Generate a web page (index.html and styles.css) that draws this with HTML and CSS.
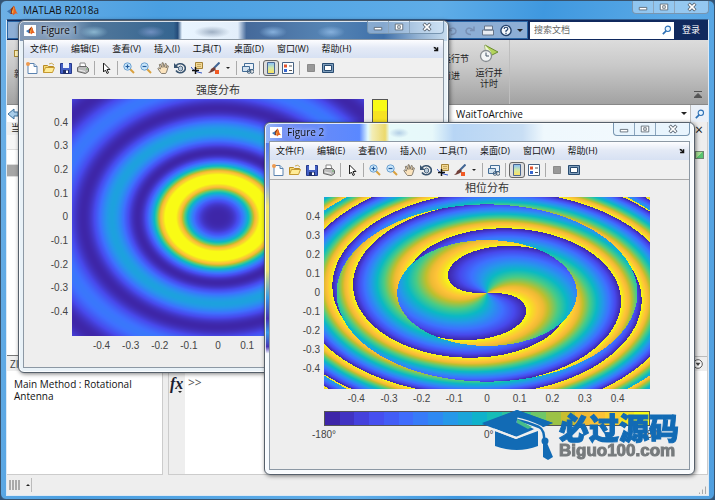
FILE: index.html
```html
<!DOCTYPE html>
<html lang="zh-CN">
<head>
<meta charset="utf-8">
<title>MATLAB R2018a</title>
<link rel="stylesheet" href="styles.css">
</head>
<body>
<svg class="sprite" aria-hidden="true">
  <symbol id="logo" viewBox="0 0 16 16"><path d="M0 9l5-3 3 3-3 4z" fill="#3f79b5"/><path d="M5 6l5-5 2 5-5 7-2 0 1-4z" fill="#8d3316"/><path d="M10 1c2 3 3 9 6 12-3-1-4-1-7 2L7 11z" fill="#e7621f"/><path d="M10 1L7 11l2 1z" fill="#f7b64a"/></symbol>
  <symbol id="new" viewBox="0 0 12 12"><path d="M2 1.500h6l3 3v7H2z" fill="#fff" stroke="#5b83b0"/><path d="M8 1.500v3h3" fill="#dbe8f5" stroke="#5b83b0"/><circle cx="2" cy="2" r="2" fill="#ee9a4e"/></symbol>
  <symbol id="open" viewBox="0 0 12 12"><path d="M.5 10.500v-7h4l1 1h5v2" fill="#f5d976" stroke="#b98b25"/><path d="M.5 10.500l2-5h9l-2 5z" fill="#ffec97" stroke="#c59930"/><path d="M6 2q3-2 5 1" fill="none" stroke="#ccab55"/></symbol>
  <symbol id="save" viewBox="0 0 12 12"><path d="M.5 1.500h11v10h-11z" fill="#4460c4" stroke="#263a8c"/><path d="M3 1h6v5H3z" fill="#eef2fb"/><path d="M3 8h6v4H3z" fill="#20306c"/><path d="M6 8.500h2V11H6z" fill="#fff"/></symbol>
  <symbol id="print" viewBox="0 0 12 12"><path d="M3 1h5l1 5H3z" fill="#fff" stroke="#888"/><path d="M.5 5.500l2-1h7l2 2v3l-3 2-8-2z" fill="#bbb" stroke="#666"/><path d="M2 8l6 1.500" stroke="#eee"/><circle cx="10" cy="7" r=".7" fill="#4a4"/></symbol>
  <symbol id="arrow" viewBox="0 0 12 12"><path d="M3.500 1v9l2-2 1.500 3.500 1.500-.7L7 7.500h3z" fill="#fff" stroke="#222"/></symbol>
  <symbol id="zin" viewBox="0 0 12 12"><path d="M7 7l4 4" stroke="#d9a03d" stroke-width="2"/><circle cx="4.500" cy="4.500" r="3.700" fill="#c9e6fb" stroke="#6ba0d0"/><path d="M2.500 4.500h4M4.500 2.500v4" stroke="#235c9d" stroke-width="1.200"/></symbol>
  <symbol id="zout" viewBox="0 0 12 12"><path d="M7 7l4 4" stroke="#d9a03d" stroke-width="2"/><circle cx="4.500" cy="4.500" r="3.700" fill="#c9e6fb" stroke="#6ba0d0"/><path d="M2.500 4.500h4" stroke="#235c9d" stroke-width="1.200"/></symbol>
  <symbol id="pan" viewBox="0 0 12 12"><path d="M3.500 10.500L.8 6.500l1-.6L3.500 7 2.300 2.500l1-.4L5 5.500 5 .8h1.200L7 5.300 8.300 1.400l1 .4L9 6l1.500-2.500.9.500-1.800 6-1 1.500h-4z" fill="#fbe3bd" stroke="#6b6357" stroke-width=".8"/></symbol>
  <symbol id="rot" viewBox="0 0 12 12"><path d="M2 4a5 4.500 0 1 1 0 4.500" fill="none" stroke="#38536f" stroke-width="1.600"/><path d="M0 1v5h5z" fill="#38536f"/><path d="M4.500 5l2-1 2 1v3l-2 1-2-1z" fill="#b9cad9" stroke="#38536f" stroke-width=".8"/></symbol>
  <symbol id="tip" viewBox="0 0 12 12"><path d="M4.500.5h7v6h-7z" fill="#f4d892" stroke="#a48338"/><path d="M6 2.500h4M6 4.500h4" stroke="#af9350" stroke-width=".7"/><path d="M0 5q3 5 11 6" fill="none" stroke="#2f54c8"/><path d="M1 8.500h7M4.500 5v7" stroke="#111" stroke-width="1.500"/></symbol>
  <symbol id="brush" viewBox="0 0 12 12"><path d="M11.500.5L6 6" stroke="#426694" stroke-width="2"/><path d="M6 5l2 2q-2 3-8 4 3-2 3-4z" fill="#713f38"/><path d="M7 8h4v4H7z" fill="#f15a24"/></symbol>
  <symbol id="link" viewBox="0 0 12 12"><path d="M2.500 1.500h9v6h-9z" fill="#eaf2fa" stroke="#436d97"/><path d="M.5 4.500h7v5h-7z" fill="#d2e2ef" stroke="#436d97"/><circle cx="7" cy="9.500" r="1.800" fill="none" stroke="#476179"/><circle cx="10" cy="9.500" r="1.800" fill="none" stroke="#476179"/></symbol>
  <symbol id="cbar" viewBox="0 0 12 12"><linearGradient id="cg" x2="0" y2="1"><stop stop-color="#86bfff"/><stop offset=".5" stop-color="#d2e9a8"/><stop offset="1" stop-color="#ffe15b"/></linearGradient><path d="M2.500.5h7v11h-7z" fill="url(#cg)" stroke="#4b6790"/></symbol>
  <symbol id="legend" viewBox="0 0 12 12"><path d="M.5.500h11v11H.5z" fill="#fff" stroke="#476282"/><path d="M2 2.500h3v3H2z" fill="#e4532c"/><path d="M2 7h3v3H2z" fill="#3767d0"/><path d="M7 4h3M7 8.500h3" stroke="#555"/></symbol>
  <symbol id="stop" viewBox="0 0 12 12"><path d="M2.500 2.500h7v7h-7z" fill="#989898" stroke="#8a8a8a"/></symbol>
  <symbol id="dock" viewBox="0 0 12 12"><path d="M.5 1.500h11v9H.5z" fill="#7f9ebc" stroke="#284b70"/><path d="M2.500 3.500h7v5h-7z" fill="#fff" stroke="#284b70"/></symbol>
  <symbol id="wmin" viewBox="0 0 12 12"><path d="M1.500 6.500h9v3h-9z" fill="#fff" stroke="#56616e"/></symbol>
  <symbol id="wmax" viewBox="0 0 12 12"><path d="M1.500 2.500h9v7h-9zM4.500 4.500h3v3h-3z" fill="#fff" stroke="#56616e"/></symbol>
  <symbol id="wclose" viewBox="0 0 12 12"><path d="M2 2l8 8M10 2l-8 8" stroke="#56616e" stroke-width="4"/><path d="M2.500 2.500l7 7M9.500 2.500l-7 7" stroke="#fff" stroke-width="2"/></symbol>
  <symbol id="find" viewBox="0 0 12 12"><path d="M1 11l4-4" stroke="#2d70b5" stroke-width="2"/><circle cx="7" cy="4.500" r="3.200" fill="#e8f5ff" stroke="#2d70b5" stroke-width="1.300"/></symbol>
  <symbol id="run" viewBox="0 0 20 20"><path d="M6 1l13 7L7 14z" fill="#b3d35c" stroke="#6c8d32"/><path d="M6 1l6 7-5 6z" fill="#f0f7d5"/><circle cx="7" cy="12" r="5.500" fill="#f4f6f7" stroke="#878c91" stroke-width="1.300"/><path d="M7 8.500V12h3" fill="none" stroke="#456"/></symbol>
  <symbol id="dockarrow" viewBox="0 0 8 8"><path d="M1 1q3 0 4 3V1.500h2V7H1.500V5H4Q3 3 1 3z" fill="#111"/></symbol>
</svg>

<template id="figure-bars">
  <nav class="menu" aria-label="菜单">
    <button>文件(F)</button><button>编辑(E)</button><button>查看(V)</button><button>插入(I)</button><button>工具(T)</button><button>桌面(D)</button><button>窗口(W)</button><button>帮助(H)</button>
    <button class="dockbtn" aria-label="停靠"><svg><use href="#dockarrow"/></svg></button>
  </nav>
  <div class="tools">
    <button aria-label="新建"><svg><use href="#new"/></svg></button>
    <button aria-label="打开"><svg><use href="#open"/></svg></button>
    <button aria-label="保存"><svg><use href="#save"/></svg></button>
    <button aria-label="打印"><svg><use href="#print"/></svg></button>
    <i></i>
    <button aria-label="选择"><svg><use href="#arrow"/></svg></button>
    <i></i>
    <button aria-label="放大"><svg><use href="#zin"/></svg></button>
    <button aria-label="缩小"><svg><use href="#zout"/></svg></button>
    <button aria-label="平移"><svg><use href="#pan"/></svg></button>
    <button aria-label="旋转"><svg><use href="#rot"/></svg></button>
    <button aria-label="数据游标"><svg><use href="#tip"/></svg></button>
    <button aria-label="刷亮"><svg><use href="#brush"/></svg></button>
    <span class="caret"></span>
    <i></i>
    <button aria-label="链接"><svg><use href="#link"/></svg></button>
    <i></i>
    <button class="on" aria-label="颜色栏"><svg><use href="#cbar"/></svg></button>
    <button aria-label="图例"><svg><use href="#legend"/></svg></button>
    <i></i>
    <button aria-label="隐藏绘图工具"><svg><use href="#stop"/></svg></button>
    <button aria-label="显示绘图工具"><svg><use href="#dock"/></svg></button>
  </div>
</template>

<main class="app">
  <header class="apptitle"><svg class="logo"><use href="#logo"/></svg><h1>MATLAB R2018a</h1>
    <div class="winbtns"><button aria-label="最小化"><svg><use href="#wmin"/></svg></button><button aria-label="最大化"><svg><use href="#wmax"/></svg></button><button aria-label="关闭"><svg><use href="#wclose"/></svg></button></div>
  </header>
  <div class="shell">
    <div class="quick">
      <div class="quicktools">
        <svg viewBox="0 0 14 12"><path d="M3 2v4h4M3 6q6-5 8 0 0 4-5 4" fill="none" stroke="#7890b4" stroke-width="1.500"/></svg>
        <svg viewBox="0 0 14 12"><path d="M11 2v4H7M11 6Q5 1 3 6q0 4 5 4" fill="none" stroke="#7890b4" stroke-width="1.500"/></svg>
        <svg viewBox="0 0 14 12"><path d="M3.500 1.500h8v4h-8zM1.500 5.500h11v5h-11z" fill="#e8ecf2" stroke="#667488"/></svg>
        <svg viewBox="0 0 14 14"><circle cx="7" cy="7" r="5.500" fill="#f4f8fc" stroke="#25446e" stroke-width="1.500"/><path d="M5 5.500q0-2 2-2t2 1.800q0 1-2 2V8.500M7 9.500v1.500" fill="none" stroke="#25446e" stroke-width="1.300"/></svg>
        <span class="caret"></span>
      </div>
      <label class="search"><input type="text" aria-label="搜索文档" placeholder="搜索文档"><svg><use href="#find"/></svg></label>
      <a class="login" href="#">登录</a>
    </div>
    <div class="ribbon">
      <div class="newcol"><span class="newfile"></span><span>新</span></div>
      <div class="runcol"><button>运行节</button><button>前进</button></div>
      <button class="runtime"><svg><use href="#run"/></svg><span>运行并</span><span>计时</span></button>
      <svg class="collapse" viewBox="0 0 8 7"><path d="M0 .5h8M0 6.500h8L4 2.500z" fill="#555" stroke="#555"/></svg>
    </div>
    <div class="address">
      <svg class="back" viewBox="0 0 12 12"><path d="M1 6l6-5v3h4v4H7v3z" fill="#a8cdea" stroke="#3e729e"/></svg>
      <label class="path"><select aria-label="当前文件夹"><option>WaitToArchive</option></select><span class="caret"></span></label>
      <button class="find" aria-label="搜索文件夹"><svg><use href="#find"/></svg></button>
    </div>
    <div class="workspace">
      <section class="side"><h2>当前</h2><div class="row"></div><div class="row blank"></div><div class="row sel"></div><div class="files"></div><h3>ZI</h3><p>Main Method : Rotational Antenna</p></section>
      <section class="right">
        <div class="editor"><div class="gutter"><button aria-label="关闭编辑器">×</button><span class="ok"></span></div></div>
        <div class="cmdhead"><svg viewBox="0 0 10 10"><circle cx="5" cy="5" r="4.300" fill="#fff" stroke="#555"/><path d="M2.500 3.800h5L5 7z" fill="#444"/></svg></div>
        <div class="cmd"><div class="fx">fx<span class="caret"></span></div><code>&gt;&gt;</code></div>
      </section>
    </div>
    <footer class="status"><span class="bars"></span><span class="up"></span><span class="grip"></span></footer>
  </div>
</main>

<section class="figure one" aria-label="Figure 1">
  <header><span class="badge"><svg class="logo"><use href="#logo"/></svg></span><h2>Figure 1</h2>
    <div class="winbtns"><button aria-label="最小化"><svg><use href="#wmin"/></svg></button><button aria-label="最大化"><svg><use href="#wmax"/></svg></button><button aria-label="关闭"><svg><use href="#wclose"/></svg></button></div></header>
  <div class="pane">
    <div class="bars-slot"></div>
    <div class="axes">
      <h3>强度分布</h3>
      <div class="yticks"></div>
      <canvas id="intensity" width="292" height="237"></canvas>
      <canvas class="vbar" id="vbar" width="14" height="237"></canvas>
      <div class="xticks"></div>
    </div>
  </div>
</section>

<section class="figure two" aria-label="Figure 2">
  <header><span class="badge"><svg class="logo"><use href="#logo"/></svg></span><h2>Figure 2</h2>
    <div class="winbtns"><button aria-label="最小化"><svg><use href="#wmin"/></svg></button><button aria-label="最大化"><svg><use href="#wmax"/></svg></button><button aria-label="关闭"><svg><use href="#wclose"/></svg></button></div></header>
  <div class="pane">
    <div class="bars-slot"></div>
    <div class="axes">
      <h3>相位分布</h3>
      <div class="yticks"></div>
      <canvas id="phase" width="326" height="192"></canvas>
      <div class="xticks"></div>
      <canvas class="hbar" id="hbar" width="324" height="13"></canvas>
      <div class="degrees"><span>-180°</span><span>0°</span><span>180°</span></div>
    </div>
  </div>
</section>

<div class="brand">
  <svg viewBox="0 0 72 51"><path d="M0 14L35 0l36 13-14 6-22-9v3l18 7-18 7z" fill="#126bb5"/><path d="M13 21l21 8 22-8v15q-21 8-43 0z" fill="#126bb5"/><path d="M0 13l34 13 18-7-16-7 2-3 20 8 13-4L35 0z" fill="#126bb5"/><path d="M12 19.500l22 8.500 19-8" fill="none" stroke="#eee" stroke-width="2"/><path d="M35 10q10 2 23 8 6 3 5 15" fill="none" stroke="#eee" stroke-width="5"/><path d="M35 10q10 2 22 7 6 3 5 15" fill="none" stroke="#126bb5" stroke-width="2.500"/><circle cx="63" cy="31" r="3.500" fill="#126bb5"/><path d="M61 33h4l6 14-5 3-5-3z" fill="#126bb5"/><path d="M35 9l15 8-4 2-11-6z" fill="#48bd8a"/></svg>
  <div><strong>必过源码</strong><span>Biguo100.com</span></div>
</div>
<script src="plots.js"></script>
</body>
</html>
```
FILE: styles.css
```css
* { box-sizing: border-box; }
body { margin: 0; height: 100vh; overflow: hidden; position: relative; background: #315478; color: #222; font: 10px/12px "Open Sans", "Noto Sans CJK SC", sans-serif; }
h1, h2, h3, p { margin: 0; font-size: 10px; font-weight: 400; }
button { padding: 0; border: 0; background: none; color: inherit; font: inherit; }
svg { display: block; flex: none; }
.sprite { position: absolute; width: 0; height: 0; }
.logo { width: 11px; height: 11px; }
.caret { flex: none; width: 0; border: 3px solid transparent; border-top: 3px solid #222; border-bottom: 0; }

.app { height: 100vh; display: flex; flex-direction: column; padding: 0 5px 3px; border: 1px solid #38536e; border-radius: 6px; background: linear-gradient(100deg, #6db0e6, #4a9fe1 20%, #5fade8 55%, #3f98df 68%, #5caae6 85%, #509fdf); }
.apptitle { flex: none; height: 18px; display: flex; align-items: center; gap: 5px; padding-left: 1px; }
.apptitle h1 { color: #111; }
.winbtns { margin-left: auto; align-self: flex-start; display: flex; height: 13px; border: 1px solid #7795b0; border-top: 0; border-radius: 0 0 4px 4px; background: rgba(220, 237, 252, .45); }
.winbtns button { width: 21px; display: grid; place-items: center; border-right: 1px solid #8ba5bd; }
.winbtns button:last-child { width: 33px; border: 0; }
.winbtns svg { width: 10px; height: 10px; }
.shell { flex: 1; min-height: 0; display: flex; flex-direction: column; background: #eee; border: 1px solid #dce9f5; border-top-color: #335f90; }
.quick { flex: none; height: 20px; display: flex; align-items: center; background: #10295e; }
.quicktools { flex: 1; height: 18px; display: flex; justify-content: flex-end; align-items: center; gap: 4px; padding-right: 4px; margin-right: 2px; background: #8daed5; border: 1px solid #2865a5; }
.quicktools svg { width: 14px; height: 13px; }
.search { flex: 0 0 144px; height: 17px; display: flex; align-items: center; background: #fff; padding: 0 2px 0 4px; }
.search input { flex: 1; min-width: 0; border: 0; outline: 0; padding: 0; background: none; font: inherit; font-size: 9px; }
.search input::placeholder { color: #666; }
.search svg, .find svg { width: 10px; height: 10px; }
.login { width: 34px; text-align: center; color: #fff; text-decoration: none; font-size: 9px; }
.ribbon { flex: none; height: 64px; display: flex; align-items: stretch; background: linear-gradient(#dcdcdc, #c9c9c9 40%, #a2a2a2); font-size: 9px; line-height: 11px; position: relative; }
.newcol { width: 14px; overflow: hidden; padding: 10px 0 0 7px; display: flex; flex-direction: column; gap: 11px; }
.newfile { width: 6px; height: 7px; border: 1px solid #a88a36; background: #fff2b6; flex: none; }
.runcol { margin-left: auto; display: flex; flex-direction: column; gap: 6px; padding-top: 13px; align-items: flex-start; }
.runtime { width: 41px; margin-right: 198px; padding-top: 4px; display: flex; flex-direction: column; align-items: center; border-right: 1px solid #bebebe; }
.runtime svg { width: 20px; height: 20px; margin-bottom: 3px; }
.collapse { position: absolute; right: 6px; bottom: 6px; width: 8px; height: 7px; }
.address { flex: none; height: 18px; display: flex; align-items: center; background: #fff; border-top: 1px solid #888; }
.back { width: 12px; height: 12px; }
.path { flex: 1; display: flex; align-items: center; padding-right: 3px; padding-left: 437px; }
.path select { flex: 1; appearance: none; border: 0; background: none; color: #111; font: inherit; padding: 0; }
.find { width: 18px; height: 17px; display: grid; place-items: center; background: #eaf0f8; border-left: 1px solid #bbb; }
.workspace { flex: 1; min-height: 0; display: grid; grid-template-columns: 156px 1fr; gap: 5px; }
.side { min-height: 0; display: flex; flex-direction: column; background: #fff; border-right: 1px solid #ccc; border-bottom: 1px solid #ccc; }
.side h2 { height: 13px; padding-left: 4px; font-size: 9px; background: #eee; }
.row { height: 15px; background: #f6f6f6; border-bottom: 1px solid #ddd; }
.row.blank { background: #fff; }
.row.sel { height: 12px; background: #a6a6a6; }
.files { flex: 1; }
.side h3 { height: 16px; padding: 2px 3px; border-top: 1px solid #777; background: #eee; color: #444; }
.side p { height: 103px; padding: 7px 12px 0 7px; color: #111; }
.right { min-height: 0; display: flex; flex-direction: column; background: #fff; border: 1px solid #ccc; border-top: 0; }
.editor { flex: 1; display: flex; justify-content: flex-end; background: #fff; }
.gutter { width: 17px; display: flex; flex-direction: column; align-items: center; gap: 14px; padding-top: 1px; background: #eee; border-left: 1px solid #ccc; }
.gutter button { font: 14px/14px "Open Sans", sans-serif; color: #222; }
.ok { width: 9px; height: 8px; background: linear-gradient(135deg, #a7e096 50%, #58c56f 50%); border: 1px solid #708570; }
.cmdhead { height: 15px; display: flex; justify-content: flex-end; align-items: center; padding-right: 4px; background: #eee; border-top: 1px solid #bbb; }
.cmdhead svg { width: 10px; height: 10px; }
.cmd { height: 103px; display: flex; gap: 3px; }
.fx { width: 16px; padding: 5px 1px; background: #eee; font: italic bold 16px/15px "Liberation Serif", serif; color: #1a1d30; }
.fx .caret { display: block; margin-left: 8px; border-width: 2px; border-bottom: 0; }
.cmd code { padding-top: 6px; font: 12px/12px "Open Sans", sans-serif; color: #555; }
.status { flex: none; height: 20px; display: flex; align-items: center; gap: 3px; padding: 0 2px; }
.bars { width: 12px; height: 10px; background: repeating-linear-gradient(90deg, #aaa 0 2px, #eee 2px 3px); }
.up { height: 14px; width: 8px; border-right: 1px solid #bbb; display: grid; place-items: center; }
.up::before { content: ""; border: 2px solid transparent; border-top: 0; border-bottom-color: #222; }
.grip { margin: auto 0 1px auto; width: 8px; height: 8px; background: repeating-linear-gradient(90deg, transparent 0 1px, #aaa 1px 2px, transparent 2px 3px); clip-path: polygon(100% 0, 100% 100%, 0 100%); }

.figure { position: absolute; width: 431px; display: flex; flex-direction: column; padding: 0 4px 4px; border: 1px solid #56606b; border-radius: 6px; box-shadow: inset 0 0 0 1px rgba(255, 255, 255, .8), 1px 1px 4px rgba(0, 0, 0, .5); }
.one { left: 18px; top: 20px; background: radial-gradient(ellipse 14px 6px at 75px 11px, #8bb6d0, transparent) no-repeat, radial-gradient(ellipse 14px 6px at 132px 11px, #6f8fc0, transparent) no-repeat, radial-gradient(ellipse 18px 6px at 193px 11px, #9fb0c4, transparent) no-repeat, radial-gradient(ellipse 14px 6px at 254px 11px, #86b0dc, transparent) no-repeat, radial-gradient(ellipse 14px 6px at 312px 11px, #86b0dc, transparent) no-repeat, linear-gradient(90deg, #8298b5, #7d9bbb 12%, #51779b 17%, #356590 36%, #244b79 37%, #e9f5ff 38%, #e3eefa 51%, #45699a 53%, #5685b5 72%, #3f70a9 85%, #93b2d3 93%, #c9deef) 0 0 / 100% 20px no-repeat, #e9f2f8; }
.two { left: 264px; top: 122px; background: radial-gradient(ellipse 10px 5px at 134px 10px, #b4cfe6, transparent) no-repeat, linear-gradient(90deg, #99b9fa, #718df4 5%, #5a88ff 22%, #e1faff 24%, #f2edb6 25%, #ecd96c 28%, #e7fafa 29%, #e7f8fa 39%, #b7d5f5 44%, #c8def4 60%, #eff8fd 65%, #f4fafe) 0 0 / 100% 20px no-repeat, linear-gradient(#557ced, #8fafeb 12%, #f5e76e 18%, #f5e76e 36%, #389ae7 44%, #4634b5 50%, #389ae7 54%, #4634b5 58%, #f7fbff 60%) 0 20px / 5px 100% no-repeat, #f8fbfd; }
.figure header { height: 18px; display: flex; align-items: center; gap: 5px; padding-left: 1px; }
.figure header h2 { color: #111; text-shadow: 0 0 5px #fff; }
.badge { width: 12px; height: 11px; background: #fff; display: grid; place-items: center; }
.badge .logo { width: 9px; height: 9px; }
.pane { background: #eee; border: 1px solid #8c98a4; }
.menu { height: 18px; display: flex; align-items: center; gap: 13px; padding: 0 4px 0 6px; background: linear-gradient(#fdfdff, #e4eaf6 45%, #d7e1f3); font: 9px/12px "Open Sans", "Noto Sans CJK SC", sans-serif; color: #111; }
.dockbtn { margin-left: auto; }
.dockbtn svg { width: 6px; height: 6px; }
.tools { height: 20px; display: flex; align-items: center; gap: 1px; border-bottom: 1px solid #aaa; background: #f0f0f0; }
.tools button { width: 16px; height: 16px; display: grid; place-items: center; }
.tools svg { width: 12px; height: 12px; }
.tools i { width: 1px; height: 14px; margin: 0 2px; background: #aaa; }
.tools .caret { margin: 0 3px; border-width: 2px; border-bottom: 0; }
.tools .on { border: 1px solid #666; border-radius: 3px; background: #ddd; }
.axes { display: grid; font: 10px/12px "Liberation Sans", "Noto Sans CJK SC", sans-serif; color: #444; }
.axes h3 { grid-column: 2; text-align: center; font: 11px/14px "Liberation Serif", "Noto Sans CJK SC", serif; color: #333; }
.axes canvas { display: block; width: 100%; }
.one .axes { grid-template-columns: 48px 292px 16px; grid-template-rows: 21px 237px 31px; }
.one h3 { padding-top: 5px; }
.axes .vbar { width: 16px; margin-left: 8px; border: 1px solid #555; height: 237px; }
.two .axes { grid-template-columns: 54px 326px; grid-template-rows: 17px 192px 22px 15px 43px; }
.two h3 { padding-top: 1px; }
.yticks { grid-column: 1; display: grid; grid-template-rows: repeat(9, 1fr); align-items: center; text-align: right; padding-right: 4px; }
.one .yticks { padding-block: 12px; }
.two .yticks { padding-block: 10px; }
.xticks { grid-column: 2; display: grid; grid-template-columns: repeat(9, 1fr); text-align: center; padding-top: 4px; }
.one .xticks { padding-inline: 15px; }
.two .xticks { padding-inline: 16px; }
.axes .hbar { grid-column: 2; height: 15px; border: 1px solid #555; }
.degrees { grid-column: 2; display: flex; justify-content: space-between; padding-top: 3px; margin: 0 -12px; }

.brand { position: absolute; left: 482px; top: 410px; display: flex; gap: 5px; align-items: flex-start; }
.brand svg { width: 72px; height: 51px; }
.brand strong { display: block; color: #126bb5; font: 900 30px/32px "Noto Sans CJK SC", sans-serif; -webkit-text-stroke: 1px #126bb5; }
.brand span { display: block; color: #777b7d; font: bold 17px/17px "Liberation Sans", sans-serif; -webkit-text-stroke: 1px #777b7d; }
```
FILE: plots.js
```js
const template = document.getElementById('figure-bars');
document.querySelectorAll('.bars-slot').forEach(slot => slot.replaceWith(template.content.cloneNode(true)));

const ticks = ['-0.4', '-0.3', '-0.2', '-0.1', '0', '0.1', '0.2', '0.3', '0.4'];
const fill = (el, labels) => labels.forEach(t => {
  const s = document.createElement('span');
  s.textContent = t;
  el.append(s);
});
document.querySelectorAll('.xticks').forEach(el => fill(el, ticks));
document.querySelectorAll('.yticks').forEach(el => fill(el, [...ticks].reverse()));

const stops = [
  [0, 62, 38, 168], [0.125, 71, 73, 236], [0.25, 62, 112, 255], [0.375, 38, 150, 235],
  [0.5, 10, 185, 195], [0.625, 72, 203, 134], [0.75, 190, 191, 45], [0.81, 238, 186, 52],
  [0.875, 254, 195, 56], [0.94, 246, 221, 38], [1, 249, 251, 21]
];
function parula(v) {
  v = Math.min(1, Math.max(0, v));
  let i = 1;
  while (i < stops.length - 1 && v > stops[i][0]) i++;
  const a = stops[i - 1], b = stops[i], t = (v - a[0]) / (b[0] - a[0]);
  return [1, 2, 3].map(k => a[k] + (b[k] - a[k]) * t);
}
// Bessel function of the first kind, order 2, from its integral form.
function j2(x) {
  let sum = 0;
  for (let i = 0; i < 40; i++) {
    const t = (i + 0.5) * Math.PI / 40;
    sum += Math.cos(2 * t - x * Math.sin(t));
  }
  return sum / 40;
}
const Z2 = 2.99;
const radial = r => j2(32.65 * r / Math.sqrt(r * r + Z2));
function paint(id, value) {
  const c = document.getElementById(id), ctx = c.getContext('2d');
  const img = ctx.createImageData(c.width, c.height);
  for (let y = 0; y < c.height; y++) for (let x = 0; x < c.width; x++) {
    const u = (x + 0.5) / c.width, v = (y + 0.5) / c.height;
    img.data.set([...parula(value(u, v)), 255], (y * c.width + x) * 4);
  }
  ctx.putImageData(img, 0, 0);
}
paint('intensity', (u, v) => {
  const a = radial(Math.hypot(u - 0.5, v - 0.5)) ** 2 / 0.2367;
  return a > 0.5 ? 0.5 + (a - 0.5) * 1.15 : a;
});
paint('phase', (u, v) => {
  const x = u - 0.5, y = 0.5 - v, r = Math.hypot(x, y);
  const delay = 198 * (Math.sqrt(Z2 + r * r) - Math.sqrt(Z2));
  const turn = (2 * Math.PI - 2 * Math.atan2(y, x) - delay + (radial(r) < 0 ? Math.PI : 0)) / (2 * Math.PI);
  return turn - Math.floor(turn);
});
paint('hbar', u => Math.floor(u * 22) / 21);
paint('vbar', (u, v) => 1 - Math.floor(v * 22) / 21);
```
